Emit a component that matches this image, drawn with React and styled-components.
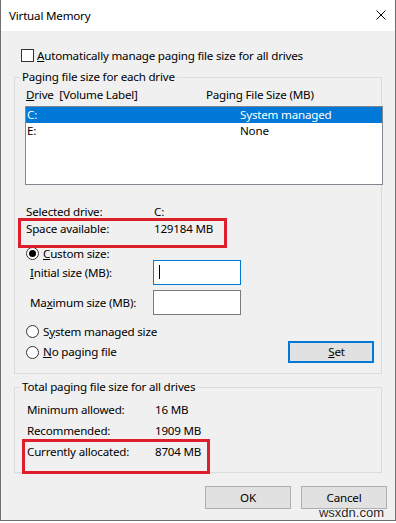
import React from "react";
import styled, { createGlobalStyle } from "styled-components";

const GlobalStyle = createGlobalStyle`
  html, body {
    margin: 0;
    padding: 0;
    background: #ffffff;
  }
  body {
    font-family: "Noto Sans", "Segoe UI", sans-serif;
    font-size: 11.6px;
    letter-spacing: -0.2px;
    color: #000;
  }
  * {
    box-sizing: border-box;
  }
`;

export default () => {
  return (
    <>
      <GlobalStyle />
      <Window>
        <TitleBar>
          <Title>Virtual Memory</Title>
          <CloseIcon width="10" height="10" viewBox="0 0 10 10">
            <path d="M0.5 0.5 L9.5 9.5 M9.5 0.5 L0.5 9.5" stroke="#000" strokeWidth="1" />
          </CloseIcon>
        </TitleBar>

        <Body>
          <CheckRow>
            <CheckBox />
            <span>
              <u>A</u>utomatically manage paging file size for all drives
            </span>
          </CheckRow>

          <Group $top={7}>
            <Legend>Paging file size for each drive</Legend>
            <GroupInner $bottom={10}>
              <ListHeader>
                <HeadCol>
                  <u>D</u>rive&nbsp; [Volume Label]
                </HeadCol>
                <span>Paging File Size (MB)</span>
              </ListHeader>
              <ListBox>
                <ListRow $selected>
                  <DriveCol>C:</DriveCol>
                  <span>System managed</span>
                </ListRow>
                <ListRow>
                  <DriveCol>E:</DriveCol>
                  <span>None</span>
                </ListRow>
              </ListBox>

              <InfoRow $top={18} $indent={11} $lh={17}>
                <InfoLabel>Selected drive:</InfoLabel>
                <span>C:</span>
              </InfoRow>
              <InfoRow $indent={11} $lh={17} $mark={{ top: -2, left: -8, width: 203, height: 24 }}>
                <InfoLabel>Space available:</InfoLabel>
                <span>129184 MB</span>
              </InfoRow>

              <RadioRow $top={10}>
                <Radio $checked />
                <span>
                  <u>C</u>ustom size:
                </span>
              </RadioRow>
              <FieldRow>
                <FieldLabel>
                  <u>I</u>nitial size (MB):
                </FieldLabel>
                <TextBox $focused>
                  <Caret />
                </TextBox>
              </FieldRow>
              <FieldRow $top={5}>
                <FieldLabel>
                  Ma<u>x</u>imum size (MB):
                </FieldLabel>
                <TextBox />
              </FieldRow>
              <RadioRow $top={10}>
                <Radio />
                <span>
                  S<u>y</u>stem managed size
                </span>
              </RadioRow>
              <BottomRow>
                <RadioRow>
                  <Radio />
                  <span>
                    <u>N</u>o paging file
                  </span>
                </RadioRow>
                <SetButton>
                  <u>S</u>et
                </SetButton>
              </BottomRow>
            </GroupInner>
          </Group>

          <Group $top={5}>
            <Legend>Total paging file size for all drives</Legend>
            <GroupInner $padTop={4} $bottom={10}>
              <InfoRow $indent={12} $lh={21}>
                <InfoLabel>Minimum allowed:</InfoLabel>
                <span>16 MB</span>
              </InfoRow>
              <InfoRow $indent={12} $lh={21}>
                <InfoLabel>Recommended:</InfoLabel>
                <span>1909 MB</span>
              </InfoRow>
              <InfoRow $indent={12} $lh={21} $mark={{ top: -2, left: -5, width: 182, height: 29 }}>
                <InfoLabel>Currently allocated:</InfoLabel>
                <span>8704 MB</span>
              </InfoRow>
            </GroupInner>
          </Group>

          <Footer>
            <DialogButton>OK</DialogButton>
            <DialogButton>Cancel</DialogButton>
          </Footer>
        </Body>

        <Watermark>wsxdn.com</Watermark>
      </Window>
    </>
  );
};

const Window = styled.div`
  position: relative;
  width: 396px;
  height: 521px;
  display: flex;
  flex-direction: column;
  background: #f0f0f0;
  border-left: 1px solid #707070;
  border-right: 1px solid #707070;
  border-bottom: 1px solid #707070;
`;

const TitleBar = styled.div`
  height: 31px;
  flex: none;
  display: flex;
  align-items: center;
  justify-content: space-between;
  padding: 0 9px 0 8px;
  background: #ffffff;
`;

const Title = styled.span`
  font-size: 11.6px;
  line-height: 16px;
  margin-top: 1px;
`;

const CloseIcon = styled.svg`
  display: block;
  margin-top: -1px;
`;

const Body = styled.div`
  flex: 1;
  padding: 18px 13px 0 13px;
`;

const CheckRow = styled.div`
  display: flex;
  align-items: center;
  gap: 3px;
  height: 13px;
  margin-left: 7px;
  line-height: 16px;
`;

const CheckBox = styled.span`
  width: 13px;
  height: 13px;
  flex: none;
  background: #ffffff;
  border: 1px solid #333333;
`;

const Group = styled.fieldset`
  margin: ${(p) => p.$top || 0}px 0 0 0;
  padding: 0;
  min-width: 0;
  border: 1px solid #dcdcdc;
`;

const Legend = styled.legend`
  margin-left: 5px;
  padding: 0 2px;
  line-height: 16px;
`;

const GroupInner = styled.div`
  padding-top: ${(p) => p.$padTop || 0}px;
  padding-bottom: ${(p) => p.$bottom || 0}px;
`;

const ListHeader = styled.div`
  display: flex;
  margin-top: 2px;
  padding-left: 11px;
  line-height: 16px;
`;

const HeadCol = styled.span`
  width: 180px;
  flex: none;
`;

const ListBox = styled.div`
  height: 79px;
  margin: 3px -2px 0 10px;
  background: #ffffff;
  border: 1px solid #828790;
`;

const ListRow = styled.div`
  display: flex;
  height: 16px;
  line-height: 16px;
  padding-left: 1px;
  background: ${(p) => (p.$selected ? "#0078d7" : "transparent")};
  color: ${(p) => (p.$selected ? "#ffffff" : "#000000")};
`;

const DriveCol = styled.span`
  width: 213px;
  flex: none;
`;

const InfoRow = styled.div`
  position: relative;
  display: flex;
  margin-top: ${(p) => p.$top || 0}px;
  padding-left: ${(p) => p.$indent}px;
  line-height: ${(p) => p.$lh}px;

  ${(p) =>
    p.$mark &&
    `
    &::after {
      content: "";
      position: absolute;
      top: ${p.$mark.top}px;
      left: ${p.$indent + p.$mark.left}px;
      width: ${p.$mark.width}px;
      height: ${p.$mark.height}px;
      border: 3px solid #dc1f2b;
    }
  `}
`;

const InfoLabel = styled.span`
  width: 128px;
  flex: none;
`;

const RadioRow = styled.div`
  display: flex;
  align-items: center;
  gap: 4px;
  height: 13px;
  margin-top: ${(p) => p.$top || 0}px;
  padding-left: 11px;
  line-height: 16px;
`;

const Radio = styled.span`
  width: 13px;
  height: 13px;
  flex: none;
  display: flex;
  align-items: center;
  justify-content: center;
  border-radius: 50%;
  background: #ffffff;
  border: 1px solid #333333;

  &::after {
    content: "";
    display: ${(p) => (p.$checked ? "block" : "none")};
    width: 7px;
    height: 7px;
    border-radius: 50%;
    background: #000000;
  }
`;

const FieldRow = styled.div`
  display: flex;
  align-items: center;
  margin-top: ${(p) => p.$top || 0}px;
  padding-left: 15px;
  line-height: 16px;
`;

const FieldLabel = styled.span`
  width: 123px;
  flex: none;
`;

const TextBox = styled.div`
  width: 88px;
  height: 25px;
  display: flex;
  align-items: center;
  padding-left: 5px;
  background: #ffffff;
  border: 1px solid ${(p) => (p.$focused ? "#0078d7" : "#7a7a7a")};
`;

const Caret = styled.span`
  width: 1px;
  height: 14px;
  margin-top: -2px;
  background: #000000;
`;

const BottomRow = styled.div`
  display: flex;
  align-items: center;
  justify-content: space-between;
  height: 22px;
  margin-top: 3px;
  padding-right: 7px;

  & > div {
    padding-left: 11px;
  }
`;

const SetButton = styled.div`
  width: 86px;
  height: 22px;
  display: flex;
  align-items: center;
  justify-content: center;
  background: #e1e1e1;
  border: 2px solid #0078d7;
  line-height: 16px;
`;

const Footer = styled.div`
  display: flex;
  justify-content: flex-end;
  gap: 10px;
  margin: 13px -5px 0 0;
`;

const DialogButton = styled.div`
  width: 86px;
  height: 23px;
  display: flex;
  align-items: center;
  justify-content: center;
  background: #e1e1e1;
  border: 1px solid #adadad;
  line-height: 16px;
`;

const Watermark = styled.span`
  position: absolute;
  right: 11px;
  bottom: 1px;
  font-family: "Liberation Sans", Arial, sans-serif;
  font-size: 13px;
  line-height: 13px;
  letter-spacing: 0;
  color: #2a2a2a;
  text-shadow: 0 0 2px #ffffff;
`;
